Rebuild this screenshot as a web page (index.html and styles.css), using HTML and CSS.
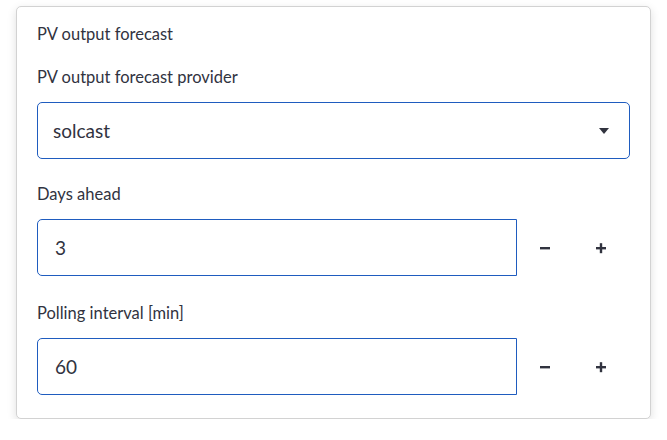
FILE: index.html
```html
<!DOCTYPE html>
<html>
<head>
<meta charset="utf-8">
<link rel="stylesheet" href="styles.css">
</head>
<body>
<div class="card">
  <div class="title">PV output forecast</div>
  <div class="field">
    <div class="label">PV output forecast provider</div>
    <div class="select">
      <span class="value">solcast</span>
      <svg class="arrow" width="10" height="6" viewBox="0 0 10 6"><path d="M0 0H10L5 6Z" fill="#31333f"/></svg>
    </div>
  </div>
  <div class="field">
    <div class="label">Days ahead</div>
    <div class="numrow">
      <div class="num"><span class="value">3</span></div>
      <div class="btn"><svg width="12" height="12" viewBox="0 0 12 12"><rect x="1" y="5" width="10" height="2.4" fill="#31333f"/></svg></div>
      <div class="btn"><svg width="12" height="12" viewBox="0 0 12 12"><rect x="1" y="5" width="10" height="2.4" fill="#31333f"/><rect x="4.8" y="1.2" width="2.4" height="10" fill="#31333f"/></svg></div>
    </div>
  </div>
  <div class="field">
    <div class="label">Polling interval [min]</div>
    <div class="numrow">
      <div class="num"><span class="value">60</span></div>
      <div class="btn"><svg width="12" height="12" viewBox="0 0 12 12"><rect x="1" y="5" width="10" height="2.4" fill="#31333f"/></svg></div>
      <div class="btn"><svg width="12" height="12" viewBox="0 0 12 12"><rect x="1" y="5" width="10" height="2.4" fill="#31333f"/><rect x="4.8" y="1.2" width="2.4" height="10" fill="#31333f"/></svg></div>
    </div>
  </div>
</div>
</body>
</html>
```
FILE: styles.css
```css
html, body {
  margin: 0;
  padding: 0;
  background: #ffffff;
}
body {
  font-family: "Lato", "Liberation Sans", sans-serif;
  color: #31333f;
}
.card {
  box-sizing: border-box;
  margin: 6px 0 0 16px;
  width: 635px;
  height: 413px;
  border: 1px solid #d2d2d2;
  border-radius: 5px;
  box-shadow: 0 3px 10px rgba(0, 0, 0, 0.13);
  padding: 15px 20px 0 20px;
  background: #fff;
}
.title {
  font-size: 16.5px;
  line-height: 24px;
}
.field {
  display: flex;
  flex-direction: column;
  margin-top: 19px;
}
.field + .field {
  margin-top: 23px;
}
.label {
  font-size: 16.5px;
  line-height: 24px;
  margin-bottom: 13px;
}
.select {
  box-sizing: border-box;
  height: 57px;
  border: 1px solid #1f5cbf;
  border-radius: 5px;
  display: flex;
  align-items: center;
  justify-content: space-between;
  padding: 0 20px 0 15px;
}
.value {
  font-size: 19px;
}
.numrow {
  display: flex;
  height: 57px;
  margin-bottom: 2px;
}
.num {
  box-sizing: border-box;
  width: 480px;
  border: 1px solid #1f5cbf;
  border-radius: 5px 0 0 5px;
  display: flex;
  align-items: center;
  padding-left: 17px;
}
.btn {
  width: 56px;
  display: flex;
  align-items: center;
  justify-content: center;
}
```
